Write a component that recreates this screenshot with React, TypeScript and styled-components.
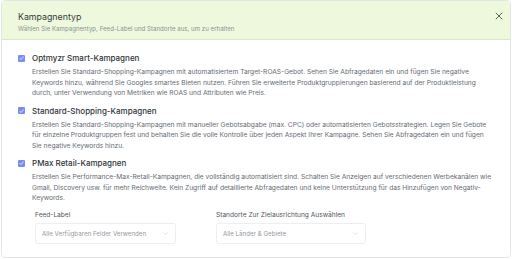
import React from 'react';
import styled, { createGlobalStyle } from 'styled-components';

const GlobalStyle = createGlobalStyle`
  body {
    margin: 0;
    background: #ffffff;
    font-family: Inter, 'Liberation Sans', sans-serif;
  }
`;

const Panel = styled.div`
  width: 510px;
  height: 258px;
  margin-left: 1px;
  border: 1px solid #e3e5e8;
  border-radius: 4px;
  overflow: hidden;
  display: flex;
  flex-direction: column;
  box-sizing: border-box;
`;

const Header = styled.div`
  background: #eef8dd;
  border-bottom: 1px solid #dde5d3;
  height: 39px;
  flex-shrink: 0;
  box-sizing: border-box;
  padding: 10px 6px 0 16px;
  display: flex;
  justify-content: space-between;
  align-items: flex-start;
`;

const HeaderText = styled.div`
  display: flex;
  flex-direction: column;
  gap: 2px;
`;

const Title = styled.div`
  font-size: 8.8px;
  color: #373c42;
  line-height: 11px;
`;

const Subtitle = styled.div`
  font-size: 6.05px;
  letter-spacing: 0.05px;
  color: #8c9096;
  line-height: 9px;
`;

const CloseButton = styled.button`
  border: none;
  background: none;
  padding: 0;
  width: 10px;
  height: 10px;
  display: flex;
  align-items: center;
  justify-content: center;
`;

const Body = styled.div`
  padding: 13px 17px 0 16px;
  display: flex;
  flex-direction: column;
  gap: 7px;
`;

const Option = styled.div`
  display: flex;
  flex-direction: column;
`;

const OptionHead = styled.div`
  display: flex;
  align-items: center;
  gap: 7px;
  height: 10px;
`;

const Check = styled.span`
  width: 7px;
  height: 7px;
  border-radius: 1px;
  background: #7b8cf1;
  display: flex;
  align-items: center;
  justify-content: center;
`;

const OptionTitle = styled.span`
  font-size: 8px;
  font-weight: 500;
  color: #2f343a;
`;

const OptionDesc = styled.p`
  margin: 4px 0 0 14px;
  font-size: 6.65px;
  line-height: 10.5px;
  color: #656b73;
`;

const Fields = styled.div`
  display: flex;
  gap: 40px;
  padding: 7px 0 0 33px;
`;

const Field = styled.div`
  display: flex;
  flex-direction: column;
  gap: 3.5px;
`;

const FieldLabel = styled.span`
  font-size: 6.6px;
  line-height: 9px;
  color: #4f545a;
`;

const Select = styled.div<{ $w: number }>`
  width: ${p => p.$w}px;
  height: 21px;
  box-sizing: border-box;
  border: 1px solid #eceef0;
  border-radius: 3px;
  padding: 0 7px 0 6px;
  display: flex;
  align-items: center;
  justify-content: space-between;
  font-size: 6.2px;
  color: #94999f;
`;

const options = [
  {
    title: 'Optmyzr Smart-Kampagnen',
    desc: 'Erstellen Sie Standard-Shopping-Kampagnen mit automatisiertem Target-ROAS-Gebot. Sehen Sie Abfragedaten ein und fügen Sie negative Keywords hinzu, während Sie Googles smartes Bieten nutzen. Führen Sie erweiterte Produktgruppierungen basierend auf der Produktleistung durch, unter Verwendung von Metriken wie ROAS und Attributen wie Preis.',
  },
  {
    title: 'Standard-Shopping-Kampagnen',
    desc: 'Erstellen Sie Standard-Shopping-Kampagnen mit manueller Gebotsabgabe (max. CPC) oder automatisierten Gebotsstrategien. Legen Sie Gebote für einzelne Produktgruppen fest und behalten Sie die volle Kontrolle über jeden Aspekt Ihrer Kampagne. Sehen Sie Abfragedaten ein und fügen Sie negative Keywords hinzu.',
  },
  {
    title: 'PMax Retail-Kampagnen',
    desc: 'Erstellen Sie Performance-Max-Retail-Kampagnen, die vollständig automatisiert sind. Schalten Sie Anzeigen auf verschiedenen Werbekanälen wie Gmail, Discovery usw. für mehr Reichweite. Kein Zugriff auf detaillierte Abfragedaten und keine Unterstützung für das Hinzufügen von Negativ-Keywords.',
  },
];

const Chevron = () => (
  <svg width="5" height="3" viewBox="0 0 10 6">
    <path d="M1 1l4 4 4-4" fill="none" stroke="#c8cbcf" strokeWidth="1.2" />
  </svg>
);

export default function App() {
  return (
    <>
      <GlobalStyle />
      <Panel>
        <Header>
          <HeaderText>
            <Title>Kampagnentyp</Title>
            <Subtitle>Wählen Sie Kampagnentyp, Feed-Label und Standorte aus, um zu erhalten</Subtitle>
          </HeaderText>
          <CloseButton>
            <svg width="8" height="8" viewBox="0 0 10 10">
              <path d="M1 1l8 8M9 1l-8 8" stroke="#4a4f55" strokeWidth="1.1" />
            </svg>
          </CloseButton>
        </Header>
        <Body>
          {options.map(o => (
            <Option key={o.title}>
              <OptionHead>
                <Check>
                  <svg width="5" height="4" viewBox="0 0 10 8">
                    <path d="M1 4l3 3 5-6" fill="none" stroke="#fff" strokeWidth="1.4" />
                  </svg>
                </Check>
                <OptionTitle>{o.title}</OptionTitle>
              </OptionHead>
              <OptionDesc>{o.desc}</OptionDesc>
            </Option>
          ))}
        </Body>
        <Fields>
          <Field>
            <FieldLabel>Feed-Label</FieldLabel>
            <Select $w={141}>
              Alle Verfügbaren Felder Verwenden
              <Chevron />
            </Select>
          </Field>
          <Field>
            <FieldLabel>Standorte Zur Zielausrichtung Auswählen</FieldLabel>
            <Select $w={150}>
              Alle Länder &amp; Gebiete
              <Chevron />
            </Select>
          </Field>
        </Fields>
      </Panel>
    </>
  );
}
